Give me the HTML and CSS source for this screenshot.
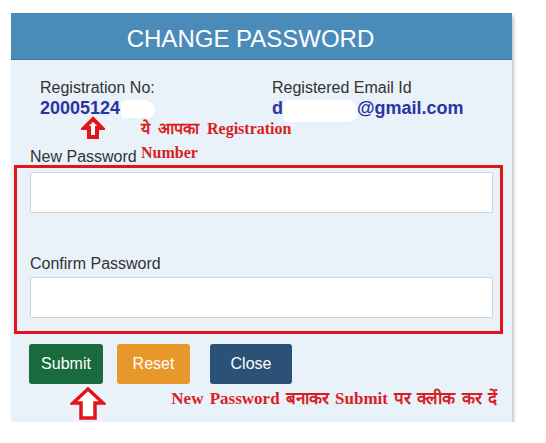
FILE: index.html
```html
<!DOCTYPE html>
<html lang="hi">
<head>
    <meta charset="UTF-8">
    <meta name="viewport" content="width=device-width, initial-scale=1.0">
    <title>Change Password</title>
    <link rel="stylesheet" href="styles.css">
</head>
<body>
    <div class="card">
        <h2 class="card-header">CHANGE PASSWORD</h2>
        <div class="card-body">
            <div class="info-row">
                <div class="info-item">
                    <div class="info-label">Registration No:</div>
                    <div class="info-value">20005124<span class="smudge smudge-reg"></span></div>
                </div>
                <div class="info-item">
                    <div class="info-label">Registered Email Id</div>
                    <div class="info-value">d<span class="smudge smudge-mail"></span>@gmail.com</div>
                </div>
                <div class="note note-reg">
                    <svg class="arrow-small" width="24" height="24" viewBox="0 0 24 24">
                        <polygon points="12,3 21,12 16,12 16,21 8,21 8,12 3,12" fill="#fff" stroke="#e3141b" stroke-width="4" stroke-linejoin="miter"/>
                    </svg>
                    <div class="note-text">ये आपका Registration<br>Number</div>
                </div>
            </div>

            <form id="passwordForm">
                <label class="field-label" for="newPassword">New Password</label>
                <div class="highlight">
                    <input type="password" id="newPassword" name="newPassword">
                    <label class="field-label confirm-label" for="confirmPassword">Confirm Password</label>
                    <input type="password" id="confirmPassword" name="confirmPassword">
                </div>
                <div class="buttons">
                    <button type="submit" class="btn btn-submit">Submit</button>
                    <button type="reset" class="btn btn-reset">Reset</button>
                    <button type="button" class="btn btn-close">Close</button>
                </div>
            </form>

            <div class="bottom-note">
                <svg class="arrow-big" width="36" height="33" viewBox="0 0 36 33">
                    <polygon points="18,2 33,16 25,16 25,31 11,31 11,16 3,16" fill="#fff" stroke="#e3141b" stroke-width="3.5" stroke-linejoin="miter"/>
                </svg>
                <div class="note-text">New Password बनाकर Submit पर क्लीक कर दें</div>
            </div>
        </div>
    </div>
</body>
</html>
```

FILE: styles.css
```css
body {
    margin: 0;
    background-color: #fff;
    font-family: "Liberation Sans", Arial, sans-serif;
    color: #333;
}

.card {
    width: 501px;
    margin: 13px 0 0 11px;
    background-color: #e9f1f9;
    box-shadow: 2px 3px 3px rgba(0, 0, 0, 0.22);
}

.card-header {
    margin: 0;
    height: 46px;
    padding-right: 22px;
    line-height: 51px;
    background-color: #4b8bba;
    border-bottom: 1px solid #3b75a2;
    color: #fff;
    font-weight: normal;
    font-size: 24px;
    text-align: center;
}

.card-body {
    padding: 0 19px 2px 19px;
}

.info-row {
    position: relative;
    display: grid;
    grid-template-columns: 232px 1fr;
    padding: 18px 0 0 10px;
    height: 71px;
}

.info-label {
    font-size: 16px;
    line-height: 19px;
    color: #333;
}

.info-value {
    font-size: 18px;
    font-weight: bold;
    line-height: 22px;
    color: #2a35a3;
}

.smudge {
    display: inline-block;
    background-color: #fff;
    border-radius: 6px 10px 8px 4px;
    vertical-align: -4px;
}

.smudge-reg {
    width: 34px;
    height: 18px;
    margin-left: 1px;
}

.smudge-mail {
    width: 74px;
    height: 22px;
    vertical-align: -8px;
}

.note {
    position: absolute;
    left: 51px;
    top: 56px;
    display: flex;
    gap: 36px;
}

.note-text {
    font-family: "Liberation Serif", "Times New Roman", serif;
    font-weight: bold;
    font-size: 16px;
    color: #d81f26;
    line-height: 24px;
}

.note-reg .note-text {
    margin-top: 1px;
    word-spacing: 4px;
}

.field-label {
    display: block;
    font-size: 16px;
    line-height: 16px;
    color: #333;
}

.highlight {
    margin: 0 -10px 0 -16px;
    padding: 4px 7px 13px 13px;
    border: 3px solid #e3141b;
}

.highlight input {
    display: block;
    width: 100%;
    height: 41px;
    box-sizing: border-box;
    border: 1px solid #cdd3da;
    background-color: #fff;
    border-radius: 2px;
}

.confirm-label {
    margin: 42px 0 5px 0;
    line-height: 17px;
}

.buttons {
    display: flex;
    margin-top: 10px;
}

.btn {
    height: 40px;
    border: none;
    border-radius: 3px;
    color: #fff;
    font-family: "Liberation Sans", Arial, sans-serif;
    font-size: 16px;
    cursor: pointer;
}

.btn-submit {
    width: 74px;
    margin-left: -1px;
    margin-right: 14px;
    background-color: #196b3d;
}

.btn-reset {
    width: 73px;
    margin-right: 20px;
    background-color: #e8972b;
}

.btn-close {
    width: 82px;
    background-color: #2b5276;
}

.bottom-note {
    display: flex;
    justify-content: space-between;
    align-items: flex-start;
    height: 36px;
    padding: 3px 0 0 40px;
    box-sizing: border-box;
}

.bottom-note .note-text {
    margin-top: 0;
    margin-right: -4px;
    font-size: 17px;
    word-spacing: 2px;
}
```
